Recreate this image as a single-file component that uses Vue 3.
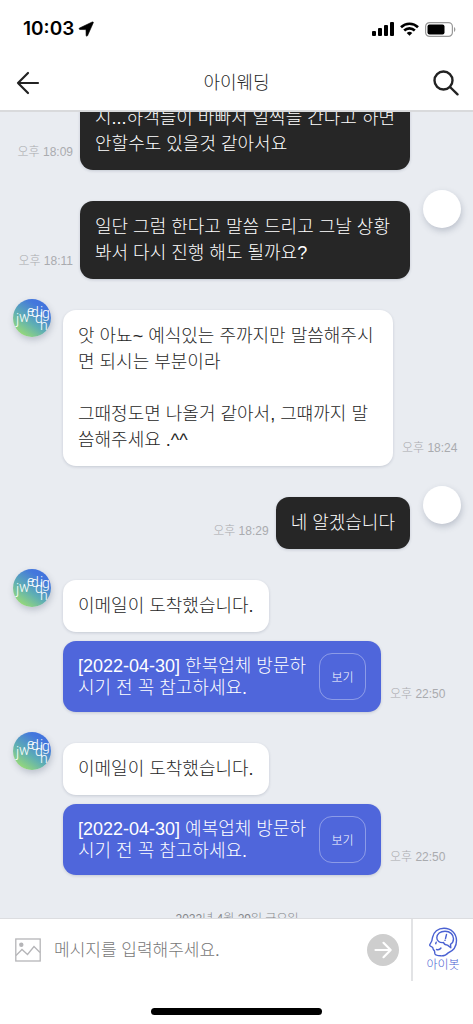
<script setup>
import { ref } from 'vue'

const draft = ref('')

const messages = [
  { side: 'mine', avatar: false, text: '시...하객들이 바빠서 일찍들 간다고 하면\n안할수도 있을것 같아서요', time: '오후 18:09' },
  { side: 'mine', avatar: true, text: '일단 그럼 한다고 말씀 드리고 그날 상황 봐서 다시 진행 해도 될까요?', time: '오후 18:11' },
  { side: 'theirs', avatar: true, text: '앗 아뇨~ 예식있는 주까지만 말씀해주시면 되시는 부분이라\n\n그때정도면 나올거 같아서, 그떄까지 말씀해주세요 .^^', time: '오후 18:24' },
  { side: 'mine', avatar: true, text: '네 알겠습니다', time: '오후 18:29' },
  { side: 'theirs', avatar: true, text: '이메일이 도착했습니다.', card: '[2022-04-30] 한복업체 방문하시기 전 꼭 참고하세요.', time: '오후 22:50' },
  { side: 'theirs', avatar: true, text: '이메일이 도착했습니다.', card: '[2022-04-30] 예복업체 방문하시기 전 꼭 참고하세요.', time: '오후 22:50' },
]
</script>

<template>
  <div class="screen">
    <div class="status">
      <div class="clock">
        <span>10:03</span>
        <svg width="16" height="16" viewBox="0 0 16 16" aria-hidden="true">
          <path d="M15.300 1.700 9.600 14.600c-.4.900-1.500.700-1.500-.3l-.1-5.700-6-.1C.9 8.400.7 7.400 1.600 7L14.200 1c.8-.3 1.400 0 1.100.7Z" stroke="#000" stroke-width=".6" />
        </svg>
      </div>
      <div class="signals">
        <svg width="22" height="14" viewBox="0 0 22 14" aria-hidden="true">
          <rect x="0" y="9" width="4" height="5" rx="1" />
          <rect x="6" y="6" width="4" height="8" rx="1" />
          <rect x="12" y="3" width="4" height="11" rx="1" />
          <rect x="18" y="0" width="4" height="14" rx="1" />
        </svg>
        <svg width="19" height="14" viewBox="0 0 19 14" aria-hidden="true">
          <g fill="none" stroke="#000" stroke-width="2.600">
            <path d="M1 5.200a12.200 12.200 0 0 1 17 0" />
            <path d="M4.200 8.500a7.600 7.600 0 0 1 10.600 0" />
          </g>
          <path d="M9.500 13.800 6.700 11a4 4 0 0 1 5.600 0Z" />
        </svg>
        <svg width="31" height="15" viewBox="0 0 31 15" aria-hidden="true">
          <rect x=".6" y=".6" width="26.800" height="13.800" rx="4" fill="none" stroke="#999" stroke-width="1.200" />
          <rect x="2.500" y="2.500" width="17" height="10" rx="2" />
          <path d="M29 5c1.800.8 1.800 4.200 0 5Z" fill="#999" />
        </svg>
      </div>
    </div>

    <header class="bar">
      <button class="icon" type="button" aria-label="뒤로">
        <svg width="24" height="24" viewBox="0 0 24 24" fill="none" stroke="#222" stroke-width="2.200" stroke-linecap="round" stroke-linejoin="round">
          <path d="M22 12H2M12 2 2 12l10 10" />
        </svg>
      </button>
      <h1>아이웨딩</h1>
      <button class="icon" type="button" aria-label="검색">
        <svg width="26" height="26" viewBox="0 0 26 26" fill="none" stroke="#222" stroke-width="2.400" stroke-linecap="round">
          <circle cx="10.500" cy="10.500" r="9" />
          <path d="m17 17 7.500 7.300" />
        </svg>
      </button>
    </header>

    <main class="chat">
      <section v-for="(m, i) in messages" :key="i" class="row" :class="[m.side, { plain: !m.avatar }]">
        <div v-if="m.avatar && m.side === 'theirs'" class="avatar brand">
          <svg width="38" height="38" viewBox="0 0 38 38" aria-hidden="true">
            <text x="3 6 14 18 22 27 29 27" y="25 23 17 18 24 18 19 31" fill="#fff">jweddign</text>
          </svg>
        </div>
        <div class="stack">
          <div class="line">
            <p class="bubble">{{ m.text }}</p>
            <time v-if="!m.card">{{ m.time }}</time>
          </div>
          <div v-if="m.card" class="line">
            <div class="card">
              <p>{{ m.card }}</p>
              <button type="button">보기</button>
            </div>
            <time>{{ m.time }}</time>
          </div>
        </div>
        <div v-if="m.side === 'mine'" class="avatar" :class="{ hidden: !m.avatar }"></div>
      </section>
      <p class="date">2022년 4월 29일 금요일</p>
    </main>

    <form class="composer" @submit.prevent>
      <button class="icon" type="button" aria-label="사진 첨부">
        <svg width="26" height="24" viewBox="0 0 26 24" fill="none" stroke="#b5b5b8" stroke-width="1.300">
          <rect x=".8" y="1" width="24.400" height="22" />
          <circle cx="6.300" cy="6.800" r="2.200" fill="#b5b5b8" stroke="none" />
          <path d="m1 17.500 6-6 5.500 5L19 8.500l6 6" />
        </svg>
      </button>
      <input v-model="draft" type="text" placeholder="메시지를 입력해주세요." aria-label="메시지" />
      <button class="icon send" type="submit" aria-label="보내기">
        <svg width="32" height="32" viewBox="0 0 32 32">
          <circle cx="16" cy="16" r="16" fill="#cecece" />
          <path d="M8.500 16h15M16.500 8.800l7.200 7.200-7.200 7.200" fill="none" stroke="#fff" stroke-width="2.200" stroke-linecap="round" stroke-linejoin="round" />
        </svg>
      </button>
      <button class="bot" type="button">
        <svg width="30" height="30" viewBox="0 0 30 30" fill="none" stroke="#4a61d2" stroke-width="1.400" stroke-linecap="round" stroke-linejoin="round">
          <path d="M4.500 10.500C5.500 5 10 1.200 16 1.200c7 0 12.500 5.200 12.500 12.300 0 6-3.500 10.500-8.500 12.500-1.500 2-4.500 3-7.500 2.800-2.500-.1-4.800-.3-5.500-1.800-.4-1-.2-2-.5-3-.3-1-1.600-1-1.400-2.300.1-1.300-.7-1.800-2.200-2.300-1.400-.5-1.500-1.300-.7-2.500 1.300-1.900 2.200-3.500 2.300-6.400Z" />
          <path d="M15.500 15.500c-4 .5-6.700-1.500-6.700-4.700C8.800 7 12.300 4.200 17 4.200c5 0 8.500 3.300 8.500 7.500 0 2.800-1.300 4.600-3 5.600l.3 3.500-3.300-2.700c-2.200-.1-3.500-1-4-2.600Z" />
          <path d="m18.500 7.500-1 4M17 13.300v.1M8.200 15.200l-.5 1.500M8.500 22.500c2 .7 3.500 0 4.500-1.500" />
        </svg>
        <span>아이봇</span>
      </button>
    </form>
    <div class="home"><span></span></div>
  </div>
</template>

<style>
body {
  margin: 0;
}
</style>

<style scoped>
.screen {
  display: flex;
  flex-direction: column;
  height: 100vh;
  overflow: hidden;
  background: #fff;
  color: #262626;
  font-family: "Liberation Sans", "Noto Sans CJK KR", sans-serif;
  font-weight: 300;
}
.screen * {
  box-sizing: border-box;
}
p,
h1 {
  margin: 0;
}
button {
  margin: 0;
  padding: 0;
  border: 0;
  background: none;
  font: inherit;
  cursor: pointer;
}
svg {
  display: block;
}
.status {
  flex: none;
  display: flex;
  align-items: center;
  justify-content: space-between;
  height: 56px;
  padding: 2px 17px 0 23px;
}
.clock {
  display: flex;
  align-items: center;
  gap: 4px;
  color: #000;
  font: 600 19px/24px Inter, sans-serif;
}
.signals {
  display: flex;
  align-items: center;
  gap: 6px;
}
.bar {
  flex: none;
  display: flex;
  align-items: center;
  justify-content: space-between;
  height: 56px;
  padding: 0 14px 0 16px;
  border-bottom: 2px solid #d9dadc;
}
.bar h1 {
  font-size: 18px;
  font-weight: 300;
  line-height: 26px;
}
.chat {
  flex: 1;
  min-height: 0;
  overflow: hidden;
  display: flex;
  flex-direction: column;
  gap: 20px;
  padding: 0 12px 0 13px;
  background: #e9ecf1;
}
.row {
  flex: none;
  display: flex;
  align-items: flex-start;
  gap: 12px;
}
.row.plain {
  margin-top: -31px;
}
.mine {
  justify-content: flex-end;
  gap: 13px;
}
.avatar {
  flex: none;
  width: 38px;
  height: 38px;
  border-radius: 50%;
  background: #fff;
  box-shadow: 1px 3px 6px rgba(60, 70, 100, 0.25);
}
.avatar.hidden {
  visibility: hidden;
}
.avatar.brand {
  background: linear-gradient(35deg, #a0e070 8%, #5eaeb4 42%, #4478dc 75%, #3f6de0);
}
.avatar text {
  font-family: Roboto, sans-serif;
  font-size: 14px;
  font-weight: 300;
}
.stack {
  display: flex;
  flex-direction: column;
  gap: 9px;
  padding-top: 11px;
}
.line {
  display: flex;
  align-items: flex-end;
  gap: 9px;
}
.mine .line {
  flex-direction: row-reverse;
  gap: 7px;
}
.bubble {
  max-width: 330px;
  padding: 13px 15px;
  border-radius: 13px;
  background: #fff;
  box-shadow: 0 1px 3px rgba(60, 70, 100, 0.2);
  font-size: 18px;
  line-height: 26px;
  white-space: pre-wrap;
  word-break: break-all;
}
.mine .bubble {
  background: #262626;
  color: #fff;
}
time {
  margin-bottom: 10px;
  color: #a9abaf;
  font-size: 12px;
  line-height: 16px;
  white-space: nowrap;
}
.card {
  display: flex;
  align-items: center;
  justify-content: space-between;
  width: 318px;
  padding: 12px 15px;
  border-radius: 13px;
  background: #4f66db;
  box-shadow: 0 1px 3px rgba(60, 70, 100, 0.2);
  color: #fff;
}
.card p {
  font-size: 18px;
  line-height: 22px;
  word-break: break-all;
}
.card button {
  flex: none;
  width: 47px;
  height: 47px;
  border: 1px solid rgba(255, 255, 255, 0.35);
  border-radius: 13px;
  color: #fff;
  font-size: 12px;
}
.date {
  flex: none;
  margin-top: 16px;
  color: #85878b;
  font-size: 12px;
  line-height: 16px;
  text-align: center;
}
.composer {
  flex: none;
  display: flex;
  align-items: center;
  height: 63px;
  padding-left: 15px;
  border-top: 1px solid #dcdde0;
}
.composer input {
  flex: 1;
  min-width: 0;
  margin: 0 12px 0 13px;
  padding: 2px 0 0;
  border: 0;
  outline: 0;
  background: none;
  color: #262626;
  font: inherit;
  font-size: 17px;
  line-height: 26px;
}
.composer input::placeholder {
  color: #777;
  opacity: 1;
}
.send {
  margin-right: 12px;
}
.bot {
  display: flex;
  flex-direction: column;
  align-items: center;
  justify-content: center;
  align-self: stretch;
  width: 62px;
  border-left: 2px solid #e2e3e5;
  color: #4a61d2;
  font-size: 12px;
  line-height: 16px;
}
.home {
  flex: none;
  display: flex;
  justify-content: center;
  height: 43px;
  padding-top: 27px;
}
.home span {
  width: 36%;
  height: 7px;
  border-radius: 4px;
  background: #000;
}
</style>
